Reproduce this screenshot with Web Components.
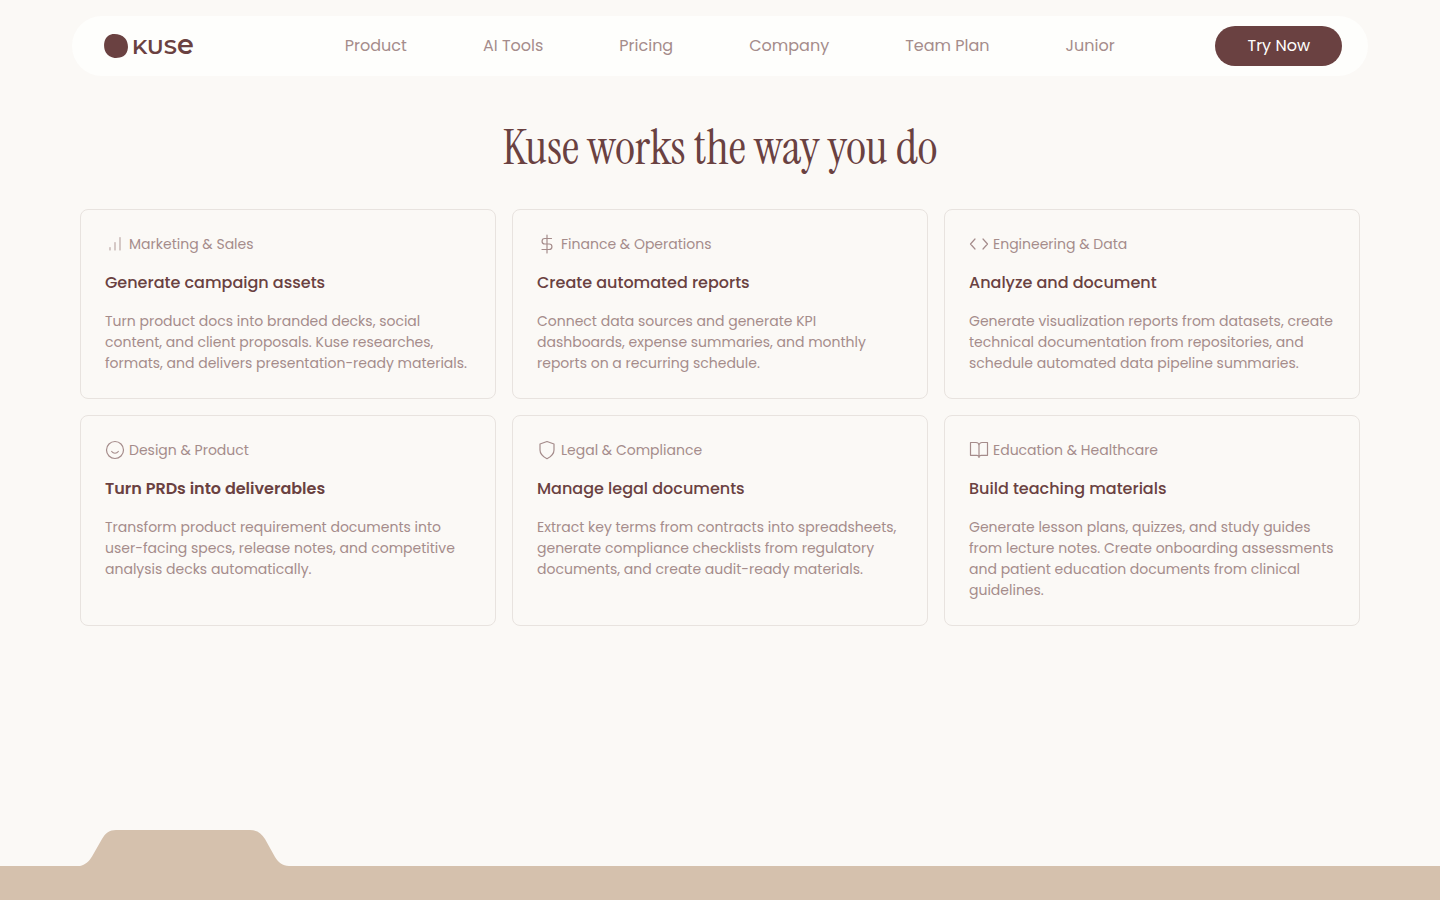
<!DOCTYPE html>
<html lang="en">
<head>
<meta charset="utf-8">
<meta name="viewport" content="width=device-width, initial-scale=1">
<title>Kuse</title>
<style>
:root{
    --brown: #6a4141;
    --muted: #a58c8b;
    --paper: #fbf9f6;
    --line: #e8e3df;
    --tan: #d5c1ad;
    --sans: Poppins, Inter, sans-serif;
    --serif: "Instrument Serif", "Liberation Serif", serif;
}
body{
    margin: 0;
    background: var(--paper);
    color: var(--brown);
    font-family: var(--sans);
}
</style>
</head>
<body>
<kuse-page>
    <kuse-header slot="header">
        <nav-link href="#product">Product</nav-link>
        <nav-link href="#tools">AI Tools</nav-link>
        <nav-link href="#pricing">Pricing</nav-link>
        <nav-link href="#company">Company</nav-link>
        <nav-link href="#team">Team Plan</nav-link>
        <nav-link href="#junior">Junior</nav-link>
    </kuse-header>
    <use-cases>
        <span slot="title">Kuse works the way you do</span>
        <use-card icon="bars" label="Marketing &amp; Sales" heading="Generate campaign assets">Turn product docs into branded decks, social content, and client proposals. Kuse researches, formats, and delivers presentation-ready materials.</use-card>
        <use-card icon="dollar" label="Finance &amp; Operations" heading="Create automated reports">Connect data sources and generate KPI dashboards, expense summaries, and monthly reports on a recurring schedule.</use-card>
        <use-card icon="code" label="Engineering &amp; Data" heading="Analyze and document">Generate visualization reports from datasets, create technical documentation from repositories, and schedule automated data pipeline summaries.</use-card>
        <use-card icon="smile" label="Design &amp; Product" heading="Turn PRDs into deliverables" strong>Transform product requirement documents into user-facing specs, release notes, and competitive analysis decks automatically.</use-card>
        <use-card icon="shield" label="Legal &amp; Compliance" heading="Manage legal documents">Extract key terms from contracts into spreadsheets, generate compliance checklists from regulatory documents, and create audit-ready materials.</use-card>
        <use-card icon="book" label="Education &amp; Healthcare" heading="Build teaching materials">Generate lesson plans, quizzes, and study guides from lecture notes. Create onboarding assessments and patient education documents from clinical guidelines.</use-card>
    </use-cases>
    <folder-footer slot="footer"></folder-footer>
</kuse-page>

<script>
const icons = {
    bars: '<path opacity=".75" d="M5 13.500v2.500M10 8.500v7.500M15 3.500v12.500"/>',
    dollar: '<path d="M10 1v18M14.500 4.500H7.800a2.700 2.700 0 0 0 0 5.500h4.400a2.700 2.700 0 0 1 0 5.500H5"/>',
    code: '<path d="M6 5 1.500 10 6 15M14 5l4.500 5L14 15"/>',
    smile: '<circle cx="10" cy="10" r="8.500"/><path d="M6.700 11.500c1.700 2.300 4.900 2.300 6.600 0"/>',
    shield: '<path d="M10 1.500 17 4v6c0 4-3 6.700-7 8.700C6 16.700 3 14 3 10V4Z"/>',
    book: '<path d="M1.500 2.500h5.500a3 3 0 0 1 3 3v12a2.200 2.200 0 0 0-2.200-2.200H1.500ZM18.500 2.500H13a3 3 0 0 0-3 3v12a2.200 2.200 0 0 1 2.200-2.200h6.300Z"/>'
}

class KusePage extends HTMLElement{
    constructor(){
        super();
        this.attachShadow({ mode: 'open' });
        this.shadowRoot.innerHTML = `
        <style>
        :host{
            display: flex;
            flex-direction: column;
            min-height: 100vh;
        }
        ::slotted([slot="footer"]){
            margin-top: auto;
        }
        </style>
        <slot name="header"></slot>
        <main><slot></slot></main>
        <slot name="footer"></slot>
        `;
    }
}

class KuseLogo extends HTMLElement{
    constructor(){
        super();
        this.attachShadow({ mode: 'open' });
        this.shadowRoot.innerHTML = `
        <style>
        :host{
            display: block;
        }
        a{
            display: flex;
            align-items: center;
            gap: 4px;
            color: var(--brown);
            text-decoration: none;
            font: 600 21px/24px Montserrat, var(--sans);
        }
        .big{
            font-size: 27px;
        }
        </style>
        <a href="#home">
            <svg width="24" height="24" viewBox="0 0 24 24" fill="currentColor" aria-hidden="true">
                <path d="M10 .1C14 0 18.300 1.300 21 4.200 23.300 6.700 24.200 10.500 23.900 14 23.600 17.500 22.200 20.600 19.300 22.300 16.800 23.700 13.500 24.100 10.500 23.900 7 23.500 3.900 21.600 2 18.800.300 16-.200 12.500.200 9.200.600 6.200 1.900 3.400 4.300 1.700 6 .600 8 .100 10 .1Z"/>
            </svg>
            <span>KUS<span class="big">e</span></span>
        </a>
        `;
    }
}

class NavLink extends HTMLElement{
    constructor(){
        super();
        this.attachShadow({ mode: 'open' });
    }

    connectedCallback(){
        this.shadowRoot.innerHTML = `
        <style>
        :host{
            display: block;
        }
        a{
            display: block;
            color: var(--muted);
            font-size: 16px;
            line-height: 24px;
            text-decoration: none;
            white-space: nowrap;
        }
        a:hover{
            color: var(--brown);
        }
        </style>
        <a href="${ this.getAttribute('href') }"><slot></slot></a>
        `;
    }
}

class KuseHeader extends HTMLElement{
    constructor(){
        super();
        this.attachShadow({ mode: 'open' });
        this.shadowRoot.innerHTML = `
        <style>
        :host{
            display: block;
            padding: 16px 72px 0;
        }
        header{
            display: flex;
            align-items: center;
            box-sizing: border-box;
            max-width: 1296px;
            margin: 0 auto;
            padding: 10px 26px 10px 32px;
            border-radius: 30px;
            background: #fefefc;
        }
        kuse-logo{
            flex: 0 0 140px;
        }
        nav{
            flex: 1;
            display: flex;
            justify-content: center;
            gap: 76px;
        }
        button{
            height: 40px;
            padding: 0 32px;
            border: 0;
            border-radius: 20px;
            background: var(--brown);
            color: #fefefc;
            font: 400 16px/24px var(--sans);
            cursor: pointer;
        }
        </style>
        <header>
            <kuse-logo></kuse-logo>
            <nav aria-label="Main"><slot></slot></nav>
            <button type="button">Try Now</button>
        </header>
        `;
    }
}

class UseCases extends HTMLElement{
    constructor(){
        super();
        this.attachShadow({ mode: 'open' });
        this.shadowRoot.innerHTML = `
        <style>
        :host{
            display: block;
            max-width: 1280px;
            margin: 0 auto;
            padding: 40px 80px 64px;
        }
        h2{
            margin: 0 0 29px;
            font: 400 48px/64px var(--serif);
            text-align: center;
        }
        .grid{
            display: grid;
            grid-template-columns: repeat(3, minmax(0, 1fr));
            gap: 16px;
        }
        </style>
        <section>
            <h2><slot name="title"></slot></h2>
            <div class="grid"><slot></slot></div>
        </section>
        `;
    }
}

class UseCard extends HTMLElement{
    constructor(){
        super();
        this.attachShadow({ mode: 'open' });
    }

    connectedCallback(){
        this.shadowRoot.innerHTML = `
        <style>
        :host{
            display: flex;
            flex-direction: column;
            gap: 16px;
            padding: 24px;
            border: 1px solid var(--line);
            border-radius: 8px;
        }
        .label{
            display: flex;
            align-items: flex-start;
            gap: 4px;
            color: var(--muted);
            font-size: 14px;
            line-height: 21px;
        }
        svg{
            fill: none;
            stroke: currentColor;
            stroke-width: 1.2;
            stroke-linecap: round;
            stroke-linejoin: round;
        }
        h3{
            margin: 0;
            font-size: 16px;
            line-height: 24px;
            font-weight: 500;
        }
        :host([strong]) h3{
            font-weight: 600;
        }
        p{
            margin: 0;
            color: var(--muted);
            font-size: 14px;
            line-height: 21px;
        }
        </style>
        <div class="label">
            <svg width="20" height="20" viewBox="0 0 20 20" aria-hidden="true">${ icons[this.getAttribute('icon')] }</svg>
            <span>${ this.getAttribute('label').replace('&', '&amp;') }</span>
        </div>
        <h3>${ this.getAttribute('heading') }</h3>
        <p><slot></slot></p>
        `;
    }
}

class FolderFooter extends HTMLElement{
    constructor(){
        super();
        this.attachShadow({ mode: 'open' });
        this.shadowRoot.innerHTML = `
        <style>
        :host{
            display: block;
        }
        svg{
            display: block;
            margin-left: 80px;
            fill: var(--tan);
        }
        footer{
            height: 34px;
            background: var(--tan);
        }
        </style>
        <svg width="210" height="36" viewBox="0 0 210 36" aria-hidden="true">
            <path d="M0 36C5 35 9 31.500 12 26.500L22 9C25.500 3 29.500 0 36 0H170C177 0 181.500 3 185 9L195 27C198.500 32.500 202.500 36 209 36Z"/>
        </svg>
        <footer></footer>
        `;
    }
}

customElements.define('kuse-page', KusePage);
customElements.define('kuse-logo', KuseLogo);
customElements.define('nav-link', NavLink);
customElements.define('kuse-header', KuseHeader);
customElements.define('use-cases', UseCases);
customElements.define('use-card', UseCard);
customElements.define('folder-footer', FolderFooter);
</script>
</body>
</html>
